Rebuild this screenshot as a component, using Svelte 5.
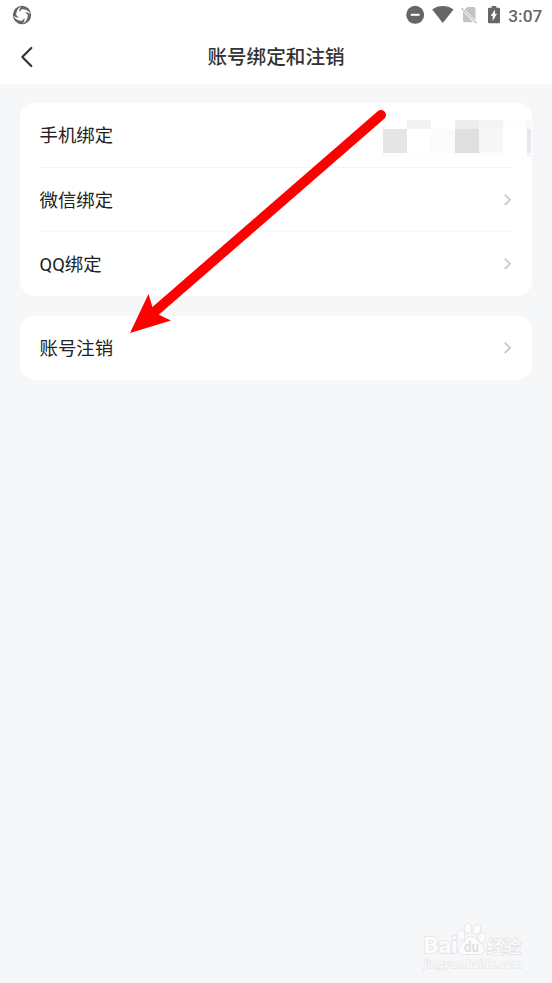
<script lang="ts">
	interface Row {
		label: string;
		masked?: boolean;
	}

	const groups: Row[][] = [
		[{ label: '手机绑定', masked: true }, { label: '微信绑定' }, { label: 'QQ绑定' }],
		[{ label: '账号注销' }]
	];

	// x, y, width, height, fill
	const blocks: [number, number, number, number, string][] = [
		[0, 9, 24, 24, '#e5e5e5'],
		[24, 0, 24, 9, '#f3f3f3'],
		[48, 9, 24, 24, '#fbfbfb'],
		[72, 0, 24, 9, '#ededed'],
		[72, 9, 24, 24, '#dfdfdf'],
		[96, 0, 24, 9, '#f4f4f4'],
		[96, 9, 24, 24, '#f7f7f7'],
		[120, 0, 24, 9, '#fdfdfd'],
		[144, 0, 4, 9, '#f8f8fa'],
		[144, 9, 4, 24, '#e6e8ec'],
		[144, 33, 4, 4, '#f8f8f9'],
		[0, 33, 48, 4, '#fdfdfd'],
		[72, 33, 48, 4, '#fdfdfd']
	];
</script>

<div class="screen">
	<header>
		<div class="status">
			<svg width="20" height="20" viewBox="0 0 20 20">
				<circle cx="10" cy="10" r="9.2" fill="#666" />
				<path d="M10 4.200 15.800 10 10 15.800 4.200 10Z" fill="#fff" />
				{#each [0, 90, 180, 270] as angle}
					<path
						d="M4.200 10.400C4 6.500 5.600 3.200 9.200 1.200C7.400 3.600 7 5.500 7.800 8Z"
						transform="rotate({angle} 10 10)"
						fill="#fff"
					/>
				{/each}
			</svg>
			<svg width="140" height="24" viewBox="404 3 140 24">
				<circle cx="415.2" cy="14.8" r="9" fill="#666" />
				<path d="M410.8 14.8h8.8" stroke="#fff" stroke-width="2" />
				<path d="M432.2 9.4C438.5 4.9 447.2 4.9 453.5 9.4L442.8 23Z" fill="#666" />
				<path d="M467.500 7H474q1.500 0 1.500 1.500V20L464.800 9.500ZM463 11.600 473.400 22.300H464.500q-1.500 0-1.500-1.500Z" fill="#c4c4c4" />
				<path d="m461.500 8 15.300 15.200" stroke="#c4c4c4" stroke-width="1.400" />
				<path d="M491.700 6h4.600v1.800h2.500q1.200 0 1.200 1.200v13.200q0 1.100-1.200 1.100h-9.600q-1.200 0-1.200-1.100V9q0-1.200 1.200-1.200h2.500Z" fill="#666" />
				<path d="M495 9.500v4.300h2l-4.300 7.200v-4.900h-2Z" fill="#fff" />
				<text x="508.300" y="21.600" class="clock">3:07</text>
			</svg>
		</div>
		<div class="nav">
			<svg class="back" width="14" height="22" viewBox="0 0 14 22">
				<path d="M12.300 2 3.300 11l9 9" />
			</svg>
			<h1>账号绑定和注销</h1>
		</div>
	</header>

	<main>
		{#each groups as rows}
			<section class="card">
				{#each rows as row}
					<div class="row">
						<span>{row.label}</span>
						{#if row.masked}
							<svg class="mosaic" width="148" height="37" shape-rendering="crispEdges">
								{#each blocks as [x, y, width, height, fill]}
									<rect {x} {y} {width} {height} {fill} />
								{/each}
							</svg>
						{:else}
							<svg class="chevron" width="9" height="14" viewBox="0 0 9 14">
								<path d="m1.800 1.600 5.200 5.200L1.800 12" />
							</svg>
						{/if}
					</div>
				{/each}
			</section>
		{/each}
	</main>

	<svg class="arrow" width="260" height="228" viewBox="128 108 260 228">
		<path d="M381 115 152 314" stroke="#f00" stroke-width="10" stroke-linecap="round" />
		<path d="M130 333 148.500 294 153 309 159.500 315 171 320.500Z" fill="#f00" />
	</svg>

	<svg class="watermark" width="112" height="56" viewBox="418 920 112 56">
		<g class="mark">
			<text x="423.500" y="953" font-size="22" textLength="34" lengthAdjust="spacingAndGlyphs">Bai</text>
			<ellipse cx="461" cy="935" rx="3.5" ry="4.8" />
			<ellipse cx="468" cy="928.5" rx="3.5" ry="4.8" />
			<ellipse cx="477" cy="929.5" rx="3.5" ry="4.8" transform="rotate(12 477 929.5)" />
			<ellipse cx="482" cy="937.5" rx="3.5" ry="4.8" transform="rotate(15 482 937.5)" />
			<path d="M471 936.500c-4 0-5 4-8 6.500-3 2.500-5 5-3.500 8.500 1.500 3.500 5 2.500 12 2.500s10.500 1 12-2.500c1.500-3.500-.5-6-4-9-3-2.500-4.500-6-8.500-6Z" />
			<text x="464" y="952" font-size="14" textLength="15" lengthAdjust="spacingAndGlyphs" class="du">du</text>
			<text x="487" y="952.500" font-size="17" textLength="34" class="cjk">经验</text>
			<text x="424" y="967.500" font-size="10.5" textLength="98" lengthAdjust="spacingAndGlyphs" class="url">jingyan.baidu.com</text>
		</g>
	</svg>
</div>

<style>
	:global(body) {
		margin: 0;
		background: #f5f7f9;
	}

	.screen {
		position: relative;
		height: 983px;
		overflow: hidden;
		color: #222;
		background: #f5f7f9;
		font-family: Roboto, 'Noto Sans CJK SC', sans-serif;
	}

	header {
		height: 84px;
		background: #fff;
	}

	.status {
		display: flex;
		justify-content: space-between;
		height: 30px;
		padding: 0 8px 0 12px;
		align-items: center;
	}

	.status svg,
	.nav svg {
		display: block;
	}

	.clock {
		font: 500 17.3px Roboto, sans-serif;
		fill: #666;
	}

	.nav {
		display: grid;
		grid-template-columns: 40px 1fr 40px;
		align-items: center;
		height: 53px;
	}

	.back {
		margin-left: 19px;
	}

	.back path {
		fill: none;
		stroke: #333;
		stroke-width: 2.2;
		stroke-linecap: round;
		stroke-linejoin: round;
	}

	h1 {
		margin: 0;
		padding-top: 2px;
		font-size: 19.6px;
		font-weight: 500;
		line-height: 28px;
		text-align: center;
		color: #333;
	}

	main {
		display: flex;
		flex-direction: column;
		gap: 20px;
		padding: 19px 20px;
	}

	.card {
		padding: 0 20px 0 19.5px;
		border-radius: 15px;
		background: #fff;
	}

	.row {
		display: flex;
		align-items: center;
		justify-content: space-between;
		box-sizing: border-box;
		height: 64px;
		font-size: 18.4px;
		line-height: 26px;
	}

	.row span {
		padding-top: 2px;
	}

	.row + .row {
		border-top: 1px solid #f2f3f4;
	}

	.row:nth-child(3) {
		height: 65px;
		border-color: #f9f9fa;
	}

	.mosaic {
		margin-right: -19px;
		margin-top: 6px;
	}

	.chevron path {
		fill: none;
		stroke: #ccc;
		stroke-width: 2;
	}

	.arrow {
		position: absolute;
		left: 128px;
		top: 108px;
	}

	.watermark {
		position: absolute;
		left: 418px;
		top: 920px;
	}

	.mark {
		fill: #fcfcfd;
		stroke: #e2e3e5;
		stroke-width: 1.6;
		paint-order: stroke;
		font-family: Roboto, 'Noto Sans CJK SC', sans-serif;
		font-weight: 700;
	}

	.du {
		fill: #dfe0e2;
		stroke: none;
	}

	.cjk {
		font-weight: 500;
	}

	.url {
		fill: #fff;
		stroke: #e5e6e8;
		stroke-width: 1.3;
		font-family: 'DejaVu Sans', sans-serif;
		font-weight: 400;
	}
</style>
